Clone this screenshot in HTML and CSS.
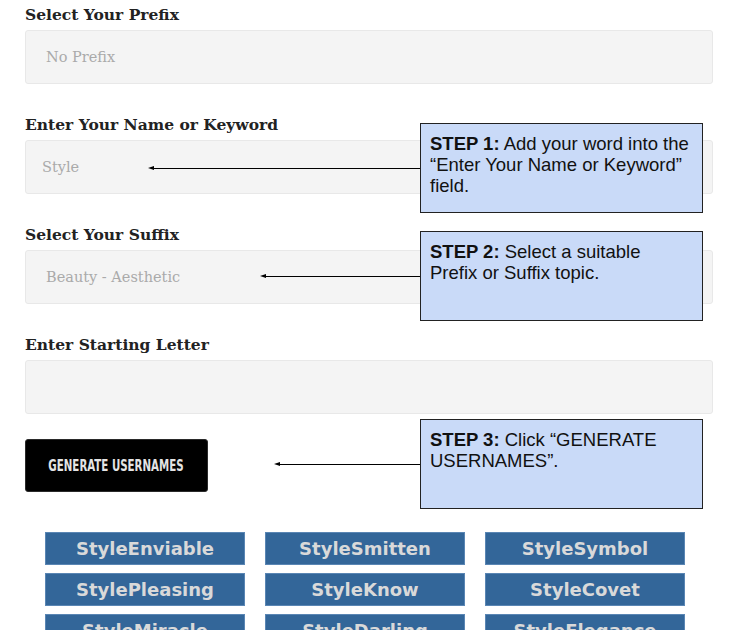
FILE: index.html
```html
<!DOCTYPE html>
<html lang="en">
<head>
<meta charset="utf-8">
<title>Username Generator</title>
<link rel="stylesheet" href="styles.css">
</head>
<body>
<div class="page">
  <form class="form">
    <div class="field">
      <label class="label">Select Your Prefix</label>
      <div class="control select">No Prefix</div>
    </div>
    <div class="field">
      <label class="label">Enter Your Name or Keyword</label>
      <div class="control text">Style</div>
    </div>
    <div class="field">
      <label class="label">Select Your Suffix</label>
      <div class="control select">Beauty - Aesthetic</div>
    </div>
    <div class="field last">
      <label class="label">Enter Starting Letter</label>
      <div class="control text"></div>
    </div>
    <button type="button" class="generate"><span class="generate-text">GENERATE USERNAMES</span></button>
  </form>

  <div class="results">
    <div class="result">StyleEnviable</div>
    <div class="result">StyleSmitten</div>
    <div class="result">StyleSymbol</div>
    <div class="result">StylePleasing</div>
    <div class="result">StyleKnow</div>
    <div class="result">StyleCovet</div>
    <div class="result">StyleMiracle</div>
    <div class="result">StyleDarling</div>
    <div class="result">StyleElegance</div>
  </div>

  <div class="callout c1">
    <div class="arrow"><span class="head"></span><span class="line"></span></div>
    <div class="note"><b>STEP 1:</b> Add your word into the<br>“Enter Your Name or Keyword”<br>field.</div>
  </div>
  <div class="callout c2">
    <div class="arrow"><span class="head"></span><span class="line"></span></div>
    <div class="note"><b>STEP 2:</b> Select a suitable<br>Prefix or Suffix topic.</div>
  </div>
  <div class="callout c3">
    <div class="arrow"><span class="head"></span><span class="line"></span></div>
    <div class="note"><b>STEP 3:</b> Click “GENERATE<br>USERNAMES”.</div>
  </div>
</div>
</body>
</html>
```

FILE: styles.css
```css
html, body {
  margin: 0;
  padding: 0;
  background: #ffffff;
}

.page {
  position: relative;
  width: 731px;
  height: 630px;
  overflow: hidden;
  padding: 4px 18px 0 25px;
  box-sizing: border-box;
}

.form {
  display: flex;
  flex-direction: column;
  align-items: flex-start;
  margin: 0;
}

.field {
  display: flex;
  flex-direction: column;
  width: 688px;
  margin-bottom: 30px;
}

.field.last {
  margin-bottom: 25px;
}

.label {
  font-family: "DejaVu Serif", "Liberation Serif", serif;
  font-weight: 700;
  font-size: 15.5px;
  line-height: 22px;
  color: #222222;
  margin-bottom: 4px;
}

.control {
  height: 54px;
  box-sizing: border-box;
  background: #f4f4f4;
  border: 1px solid #e8e8e8;
  border-radius: 3px;
  display: flex;
  align-items: center;
  font-family: "DejaVu Serif", "Liberation Serif", serif;
  font-size: 14.5px;
  color: #aaaaaa;
}

.control.select {
  padding-left: 20px;
}

.control.text {
  padding-left: 16px;
}

.generate {
  width: 183px;
  height: 53px;
  background: #000000;
  border: 1px solid #2a2a2a;
  border-radius: 3px;
  color: #e4e4e4;
  font-family: "DejaVu Sans Condensed", "DejaVu Sans", sans-serif;
  font-weight: 700;
  font-size: 15px;
  padding: 0;
  margin: 0;
  display: flex;
  align-items: center;
  justify-content: center;
}

.generate-text {
  display: inline-block;
  transform: scaleX(0.76);
  white-space: nowrap;
}

.results {
  display: grid;
  grid-template-columns: repeat(3, 200px);
  grid-auto-rows: 33px;
  column-gap: 20px;
  row-gap: 8px;
  margin: 40px 0 0 20px;
}

.result {
  background: #336699;
  border: 1px solid #5a86b4;
  box-sizing: border-box;
  color: #d9d9d9;
  font-family: "DejaVu Sans", Verdana, sans-serif;
  font-weight: 700;
  font-size: 18px;
  display: flex;
  align-items: center;
  justify-content: center;
}

.callout {
  position: absolute;
  display: flex;
  align-items: center;
}

.c1 { left: 148px; top: 123px; }
.c2 { left: 260px; top: 231px; }
.c3 { left: 274px; top: 419px; }

.arrow {
  flex: 1;
  display: flex;
  align-items: center;
}

.head {
  width: 0;
  height: 0;
  border-top: 2.5px solid transparent;
  border-bottom: 2.5px solid transparent;
  border-right: 6px solid #000000;
}

.line {
  flex: 1;
  height: 1px;
  background: #000000;
}

.c1 .arrow { width: 272px; }
.c2 .arrow { width: 160px; }
.c3 .arrow { width: 146px; }

.note {
  width: 283px;
  height: 90px;
  box-sizing: border-box;
  background: #c9daf8;
  border: 1px solid #222222;
  padding: 9px 9px;
  font-family: "Liberation Sans", Arial, sans-serif;
  font-size: 18.5px;
  line-height: 21px;
  color: #111111;
}

.note b {
  font-weight: 700;
}
```
